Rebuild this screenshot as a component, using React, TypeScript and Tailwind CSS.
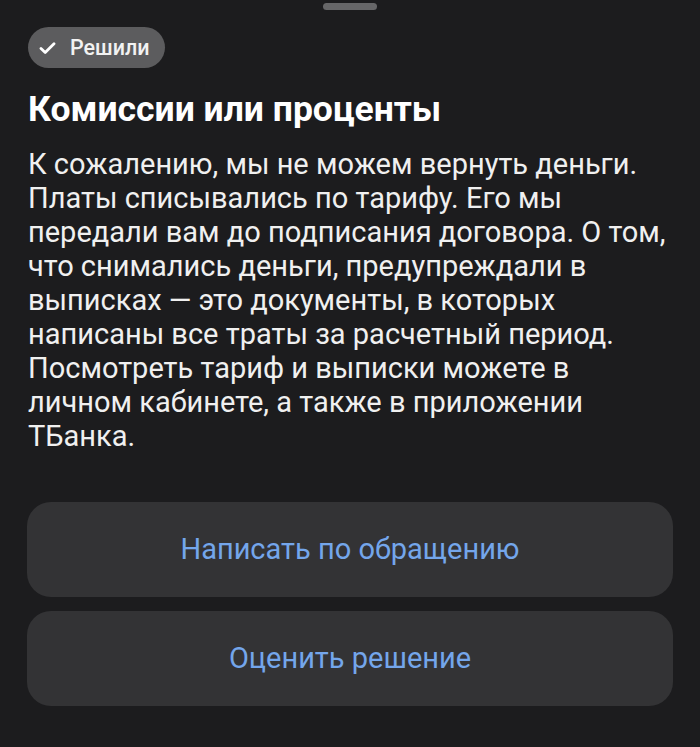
export default function App() {
  return (
    <div className="min-h-screen bg-[#1c1c1e] text-[#f2f2f2] font-['Roboto',sans-serif] relative">
      <div className="absolute top-[3px] left-1/2 -translate-x-1/2 w-[54px] h-[7px] rounded-full bg-[#666668]" />
      <div className="px-[28px] pt-[27px]">
        <div className="inline-flex items-center h-[41px] rounded-full bg-[#5c5c5e] pl-[11px] pr-[15px] gap-[14px]">
          <svg width="17" height="12" viewBox="0 0 17 12" fill="none" stroke="#ffffff" strokeWidth="2.8" strokeLinecap="round" strokeLinejoin="round">
            <path d="M2 6.4l4.2 4L15 1.8" />
          </svg>
          <span className="text-[21.5px] font-medium leading-none text-[#f2f2f2]">Решили</span>
        </div>
        <h1 className="mt-[20px] text-[35.5px] leading-[42px] font-bold text-white">Комиссии или проценты</h1>
        <p className="mt-[17px] text-[29px] leading-[34px] text-[#f0f0f0]">
          К сожалению, мы не можем вернуть деньги. Платы списывались по тарифу. Его мы передали вам до подписания договора. О том, что снимались деньги, предупреждали в выписках — это документы, в которых написаны все траты за расчетный период. Посмотреть тариф и выписки можете в личном кабинете, а также в приложении ТБанка.
        </p>
      </div>
      <div className="px-[27px] mt-[49px] flex flex-col gap-[14px]">
        <button className="h-[95px] rounded-[24px] bg-[#333335] text-[#74a6eb] text-[29px]">Написать по обращению</button>
        <button className="h-[95px] rounded-[24px] bg-[#333335] text-[#74a6eb] text-[29px]">Оценить решение</button>
      </div>
    </div>
  );
}
